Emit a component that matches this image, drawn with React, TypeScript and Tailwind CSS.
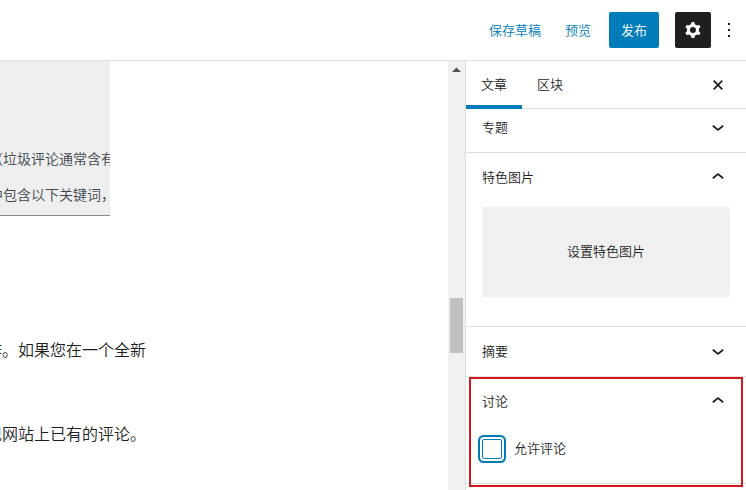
import React, { useState } from "react";

function Icon({ d, className = "" }: { d: string; className?: string }) {
  return (
    <svg viewBox="0 0 24 24" className={`size-6 shrink-0 fill-current ${className}`} aria-hidden="true">
      <path fillRule="evenodd" clipRule="evenodd" d={d} />
    </svg>
  );
}

const CHEVRON_DOWN = "M17.7 10.400L12 15l-5.700-4.600 1-1.400L12 12.800l4.700-3.800z";
const CHEVRON_UP = "M6.300 11.600L12 7l5.700 4.600-1 1.400L12 9.200l-4.700 3.800z";
const CLOSE =
  "M12 13.200l3.712 3.713 1.200-1.200L13.200 12l3.712-3.712-1.200-1.200L12 10.800 8.288 7.088l-1.200 1.200L10.800 12l-3.712 3.712 1.200 1.200z";
const COG =
  "M10.289 4.836A1 1 0 0111.275 4h1.306a1 1 0 01.987.836l.244 1.466c.787.26 1.503.679 2.108 1.218l1.393-.522a1 1 0 011.216.437l.653 1.13a1 1 0 01-.23 1.273l-1.148.944a6.025 6.025 0 010 2.435l1.149.946a1 1 0 01.23 1.272l-.653 1.13a1 1 0 01-1.216.437l-1.394-.522c-.605.54-1.32.958-2.108 1.218l-.244 1.466a1 1 0 01-.987.836h-1.306a1 1 0 01-.986-.836l-.244-1.466a5.995 5.995 0 01-2.108-1.218l-1.394.522a1 1 0 01-1.217-.436l-.653-1.131a1 1 0 01.23-1.272l1.149-.946a6.026 6.026 0 010-2.435l-1.148-.944a1 1 0 01-.23-1.272l.653-1.131a1 1 0 011.217-.437l1.393.522a5.994 5.994 0 012.108-1.218l.244-1.466zM14.929 12a3 3 0 11-6 0 3 3 0 016 0z";
const MORE = "M11 5h2v2h-2zM11 11h2v2h-2zM11 17h2v2h-2z";

function PanelHeader({ title, open = false }: { title: string; open?: boolean }) {
  return (
    <button
      type="button"
      aria-expanded={open}
      className="flex h-[49px] w-full items-center justify-between px-4 text-left"
    >
      {title}
      <Icon d={open ? CHEVRON_UP : CHEVRON_DOWN} />
    </button>
  );
}

export default function App() {
  const [allowComments, setAllowComments] = useState(false);

  return (
    <div className="flex h-screen flex-col overflow-hidden bg-white font-['Liberation_Sans','Noto_Sans_CJK_SC',sans-serif] text-[13px] leading-5 font-[350] text-[#1e1e1e]">
      <header className="flex h-[61px] shrink-0 items-center justify-end border-b border-[#e0e0e0]">
        <button type="button" className="px-3 pt-0.5 text-[#007cba]">保存草稿</button>
        <button type="button" className="px-3 pt-0.5 text-[#007cba]">预览</button>
        <button type="button" className="ml-1.5 h-9 rounded-xs bg-[#007cba] px-3 pt-0.5 text-white">发布</button>
        <button
          type="button"
          aria-label="设置"
          className="ml-4 flex size-9 items-center justify-center rounded-xs bg-[#1e1e1e] text-white"
        >
          <Icon d={COG} />
        </button>
        <button type="button" aria-label="选项" className="flex h-9 w-[35px] items-center justify-center">
          <Icon d={MORE} />
        </button>
      </header>

      <div className="flex min-h-0 flex-1">
        <main className="min-w-0 flex-1 overflow-hidden whitespace-nowrap">
          <div className="h-[155px] w-[110px] overflow-hidden border-b border-[#8c8c8c] bg-[#efefef] pt-20 text-sm leading-9 text-[#40464d]">
            <p className="-ml-[11px]">（垃圾评论通常含有</p>
            <p className="-ml-[11px]">中包含以下关键词，</p>
          </div>
          <p className="mt-[121px] -ml-3.5 text-base leading-7">作。如果您在一个全新</p>
          <p className="mt-14 -ml-3.5 text-base leading-7">现网站上已有的评论。</p>
        </main>

        <div className="flex w-[17px] shrink-0 flex-col items-center bg-[#f0f0f0]" aria-hidden="true">
          <svg viewBox="0 0 17 17" className="size-[17px] shrink-0 fill-[#505050]">
            <path d="M4 11l4.5-4.500L13 11z" />
          </svg>
          <div className="mt-[220px] h-[55px] w-[13px] shrink-0 bg-[#c1c1c1]" />
        </div>

        <aside className="w-[281px] shrink-0 border-l border-[#e0e0e0]">
          <div className="flex h-12 border-b border-[#e0e0e0]">
            <button type="button" className="-mb-px border-b-4 border-[#007cba] px-[15px] pt-1">文章</button>
            <button type="button" className="-mb-px border-b-4 border-transparent px-[15px] pt-1">区块</button>
            <button type="button" aria-label="关闭设置" className="mr-4 ml-auto">
              <Icon d={CLOSE} />
            </button>
          </div>

          <section className="-mt-1.5 border-b border-[#e0e0e0]">
            <PanelHeader title="专题" />
          </section>

          <section className="border-b border-[#e0e0e0] pb-[29px]">
            <PanelHeader title="特色图片" open />
            <div className="mt-[5px] px-4">
              <button type="button" className="h-[90px] w-full rounded-xs bg-[#f0f0f0]">设置特色图片</button>
            </div>
          </section>

          <section className="border-b border-[#e0e0e0]">
            <PanelHeader title="摘要" />
          </section>

          <section className="relative border-b border-[#e0e0e0] pb-6">
            <PanelHeader title="讨论" open />
            <label className="mt-[13px] flex items-center gap-3 px-4">
              <input
                type="checkbox"
                checked={allowComments}
                onChange={(e) => setAllowComments(e.target.checked)}
                className="size-5 appearance-none rounded-xs border border-[#007cba] bg-white ring-2 ring-[#007cba] ring-offset-2 checked:bg-[#007cba]"
              />
              允许评论
            </label>
            <div className="pointer-events-none absolute inset-x-[3px] top-0 -bottom-1 border-2 border-[#d6181c]" />
          </section>
        </aside>
      </div>
    </div>
  );
}
